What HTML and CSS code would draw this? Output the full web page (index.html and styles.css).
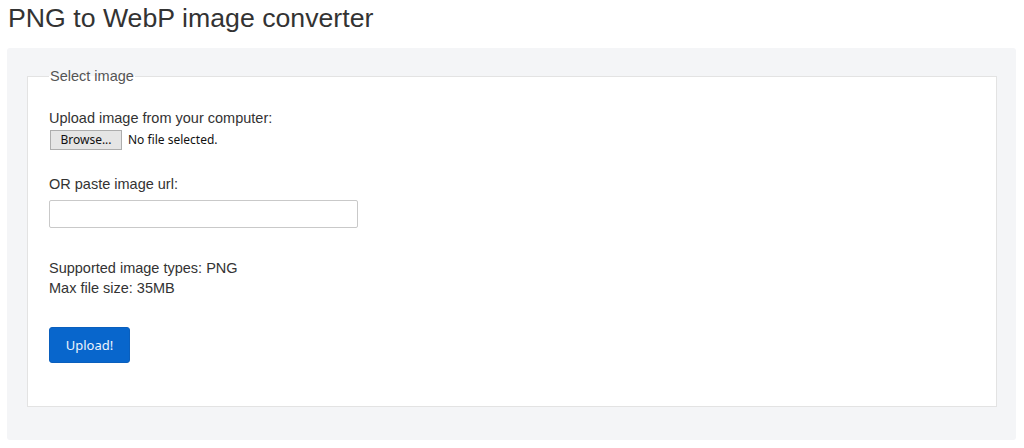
FILE: index.html
```html
<!DOCTYPE html>
<html lang="en">
<head>
<meta charset="utf-8">
<title>PNG to WebP image converter</title>
<link rel="stylesheet" href="styles.css">
</head>
<body>
<h1 class="title">PNG to WebP image converter</h1>
<div class="panel">
  <form class="upload-form">
    <fieldset class="box">
      <legend class="box-legend">Select image</legend>
      <div class="field-label">Upload image from your computer:</div>
      <div class="file-row">
        <button type="button" class="browse-btn">Browse...</button>
        <span class="file-status">No file selected.</span>
      </div>
      <div class="field-label url-label">OR paste image url:</div>
      <input class="url-input" type="text">
      <div class="info">
        <div>Supported image types: PNG</div>
        <div>Max file size: 35MB</div>
      </div>
      <button type="button" class="upload-btn">Upload!</button>
    </fieldset>
  </form>
</div>
</body>
</html>
```

FILE: styles.css
```css
html, body {
  margin: 0;
  padding: 0;
  background: #fff;
}
body {
  padding: 0 8px 0 7px;
  font-family: "Liberation Sans", Arial, sans-serif;
  color: #333;
}
.title {
  margin: 3px 0 15px 1px;
  font-size: 26.7px;
  line-height: 30px;
  font-weight: normal;
  color: #333;
}
.panel {
  background: #f4f5f7;
  border-radius: 3px;
  padding: 18px 19px 33px 20px;
}
.upload-form {
  margin: 0;
}
.box {
  margin: 0;
  background: #fff;
  border: 1px solid #e3e3e3;
  padding: 22px 21px 43px 21px;
  min-width: 0;
}
.box-legend {
  padding: 0 1px;
  font-size: 14.5px;
  line-height: 20px;
  color: #555;
}
.field-label {
  font-size: 14.5px;
  line-height: 20px;
  color: #333;
}
.file-row {
  display: flex;
  align-items: center;
  gap: 6px;
  margin-top: 2px;
  height: 20px;
}
.browse-btn {
  box-sizing: border-box;
  width: 72px;
  height: 20px;
  margin: 0 0 0 1px;
  padding: 0;
  background: #e5e5e5;
  border: 1px solid #adadad;
  border-radius: 0;
  font-family: "Noto Sans", sans-serif;
  font-size: 12px;
  line-height: 18px;
  color: #111;
}
.file-status {
  font-family: "Noto Sans", sans-serif;
  font-size: 12px;
  line-height: 18px;
  color: #111;
}
.url-label {
  margin-top: 24px;
}
.url-input {
  display: block;
  box-sizing: border-box;
  width: 309px;
  height: 28px;
  margin: 6px 0 0 0;
  padding: 4px 8px;
  border: 1px solid #c9c9c9;
  border-radius: 2px;
  background: #fff;
  font-size: 14px;
}
.info {
  margin-top: 30px;
  font-size: 14.5px;
  line-height: 20px;
  color: #333;
}
.upload-btn {
  display: block;
  box-sizing: border-box;
  width: 81px;
  height: 36px;
  margin: 29px 0 0 0;
  padding: 0;
  background: #0866cc;
  border: 1px solid #0a5fbd;
  border-radius: 3px;
  font-family: "Noto Sans", sans-serif;
  font-size: 13px;
  color: #eef4fc;
}
```
